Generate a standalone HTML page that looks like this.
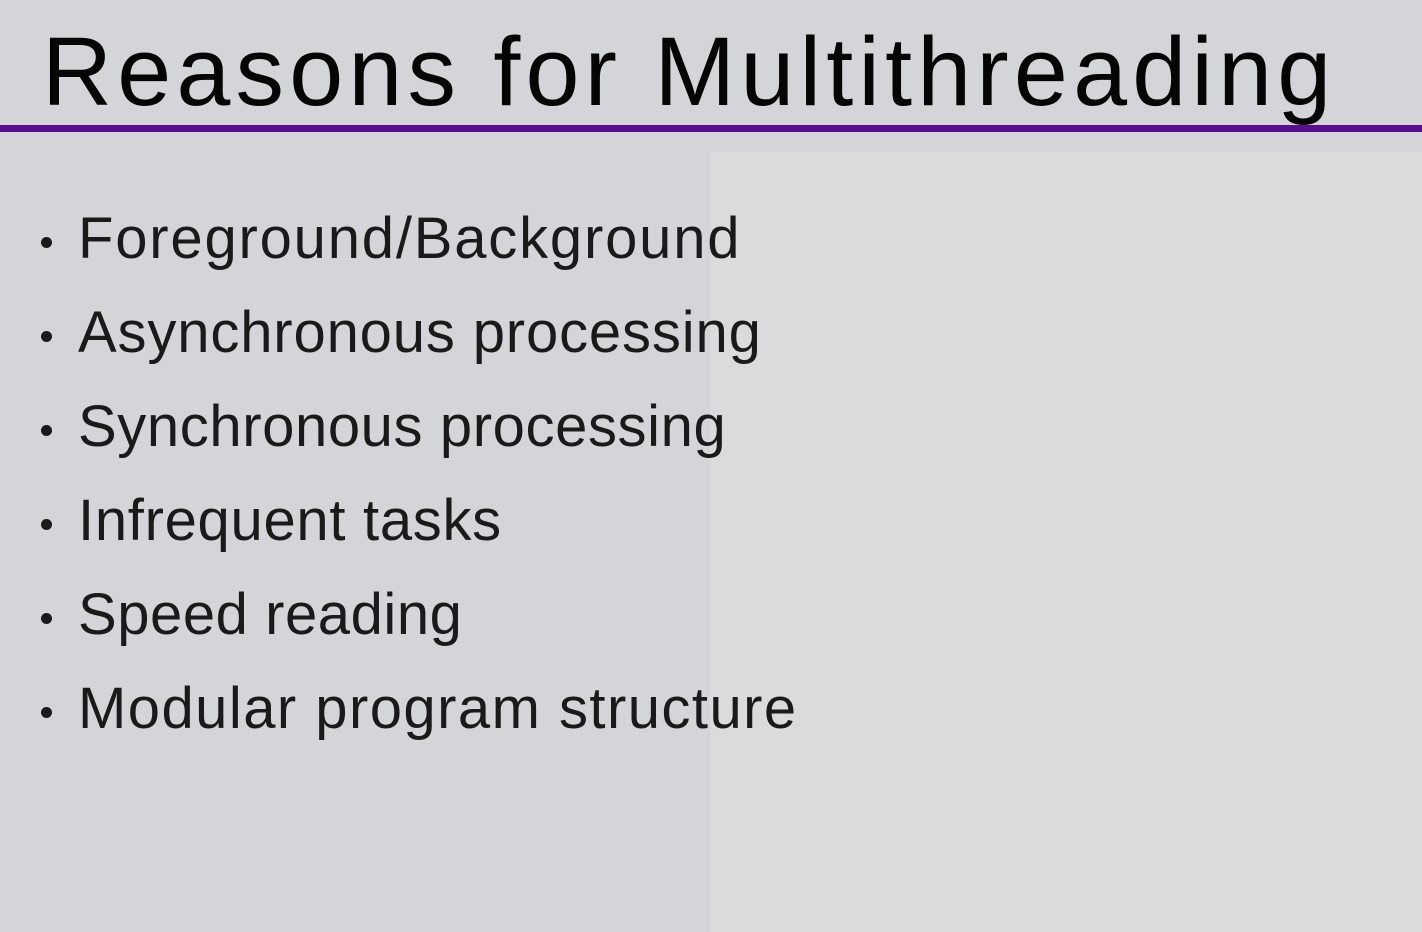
<!DOCTYPE html>
<html><head><meta charset="utf-8"><style>
html,body{margin:0;padding:0}
body{width:1422px;height:932px;background:#d4d5d8;position:relative;overflow:hidden;font-family:"Liberation Sans",Arial,sans-serif;color:#000}
.panel{position:absolute;left:710px;top:152px;width:712px;height:780px;background:#dadbdd}
.bar{position:absolute;left:0;top:125px;width:1422px;height:7px;background:#5a0f8e}
h1{position:absolute;left:42px;top:2px;margin:0;font-weight:normal;font-size:97px;line-height:140px;letter-spacing:5.2px;white-space:nowrap;color:#050505}
.item{position:absolute;left:78px;font-size:58px;letter-spacing:1.2px;white-space:nowrap;line-height:1;color:#1a1a1a}
.item:before{content:"";position:absolute;left:-37px;top:27px;width:11px;height:11px;border-radius:50%;background:#1a1a1a}
</style></head><body>
<div class="panel"></div>
<h1>Reasons for Multithreading</h1>
<div class="bar"></div>
<div class="item" style="top:210px;letter-spacing:1.8px">Foreground/Background</div>
<div class="item" style="top:304px;letter-spacing:0.85px">Asynchronous processing</div>
<div class="item" style="top:398px;letter-spacing:0.6px">Synchronous processing</div>
<div class="item" style="top:492px;letter-spacing:0.7px">Infrequent tasks</div>
<div class="item" style="top:586px;letter-spacing:0.55px">Speed reading</div>
<div class="item" style="top:680px;letter-spacing:1.45px">Modular program structure</div>
</body></html>
